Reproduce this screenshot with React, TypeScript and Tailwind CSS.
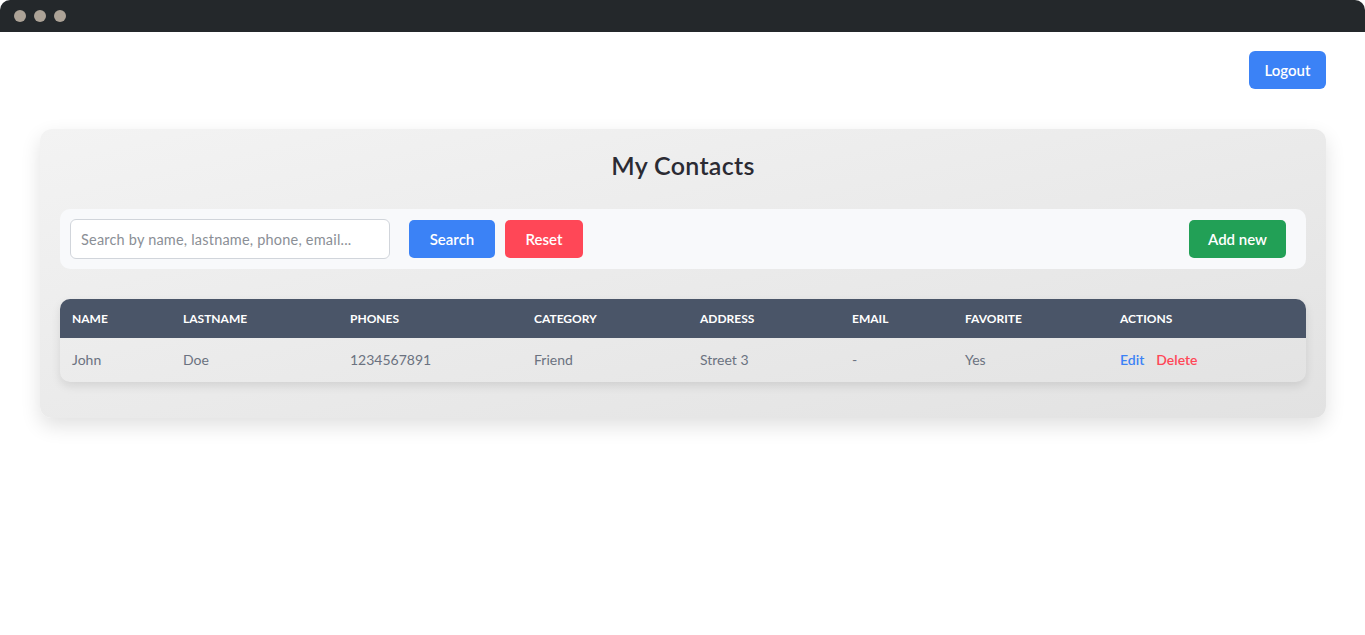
import React from "react";

const cols = [
  { label: "Name", w: "w-[111px]" },
  { label: "Lastname", w: "w-[167px]" },
  { label: "Phones", w: "w-[184px]" },
  { label: "Category", w: "w-[166px]" },
  { label: "Address", w: "w-[152px]" },
  { label: "Email", w: "w-[113px]" },
  { label: "Favorite", w: "w-[155px]" },
  { label: "Actions", w: "" },
];

const row = ["John", "Doe", "1234567891", "Friend", "Street 3", "-", "Yes"];

export default function App() {
  return (
    <div className="w-[1365px] h-[635px] bg-white overflow-hidden font-['Lato','Noto_Sans',sans-serif]">
      <div className="h-[32px] bg-[#24282b] rounded-t-[10px] flex items-center gap-[8px] pl-[14px]">
        <span className="w-[12px] h-[12px] rounded-full bg-[#ada397]" />
        <span className="w-[12px] h-[12px] rounded-full bg-[#ada397]" />
        <span className="w-[12px] h-[12px] rounded-full bg-[#ada397]" />
      </div>
      <div className="flex justify-end pt-[19px] pr-[39px]">
        <button className="w-[77px] h-[38px] rounded-[6px] bg-[#3b82f6] text-white text-[15px] font-semibold">
          Logout
        </button>
      </div>
      <div className="mx-[40px] mt-[40px] w-[1286px] rounded-[12px] bg-gradient-to-br from-[#f3f3f3] to-[#e2e2e2] shadow-[0_8px_20px_rgba(0,0,0,0.12)] px-[20px] pt-[20px] pb-[36px]">
        <h1 className="text-center text-[25px] font-semibold tracking-[0.3px] text-[#2b2b33] leading-[32px]">My Contacts</h1>
        <div className="mt-[28px] h-[60px] rounded-[10px] bg-[#f8f9fb] flex items-center pl-[10px] pr-[20px]">
          <input
            className="w-[320px] h-[40px] rounded-[6px] border border-[#d1d5db] bg-white px-[10px] text-[14.5px] tracking-[0.2px] text-[#374151] placeholder-[#8b8f96] outline-none"
            placeholder="Search by name, lastname, phone, email..."
          />
          <button className="ml-[19px] w-[86px] h-[38px] rounded-[5px] bg-[#3b82f6] text-white text-[15px] font-semibold">
            Search
          </button>
          <button className="ml-[10px] w-[78px] h-[38px] rounded-[5px] bg-[#ff4757] text-white text-[15px] font-semibold">
            Reset
          </button>
          <div className="flex-1" />
          <button className="w-[97px] h-[38px] rounded-[5px] bg-[#22a056] text-white text-[15px] font-semibold">
            Add new
          </button>
        </div>
        <div className="mt-[30px] rounded-[10px] overflow-hidden shadow-[0_4px_10px_rgba(0,0,0,0.10)]">
          <table className="w-full table-fixed border-collapse">
            <thead>
              <tr className="bg-[#4a5568] h-[39px]">
                {cols.map((c) => (
                  <th
                    key={c.label}
                    className={`${c.w} text-left pl-[12px] text-[12px] font-bold uppercase text-white`}
                  >
                    {c.label}
                  </th>
                ))}
              </tr>
            </thead>
            <tbody>
              <tr className="h-[44px]">
                {row.map((v, i) => (
                  <td key={i} className="pl-[12px] pb-[1px] text-[14px] text-[#6b7280]">
                    {v}
                  </td>
                ))}
                <td className="pl-[12px] pb-[1px] text-[14px] font-semibold">
                  <span className="text-[#3b82f6]">Edit</span>
                  <span className="ml-[12px] text-[#ff4757]">Delete</span>
                </td>
              </tr>
            </tbody>
          </table>
        </div>
      </div>
    </div>
  );
}
